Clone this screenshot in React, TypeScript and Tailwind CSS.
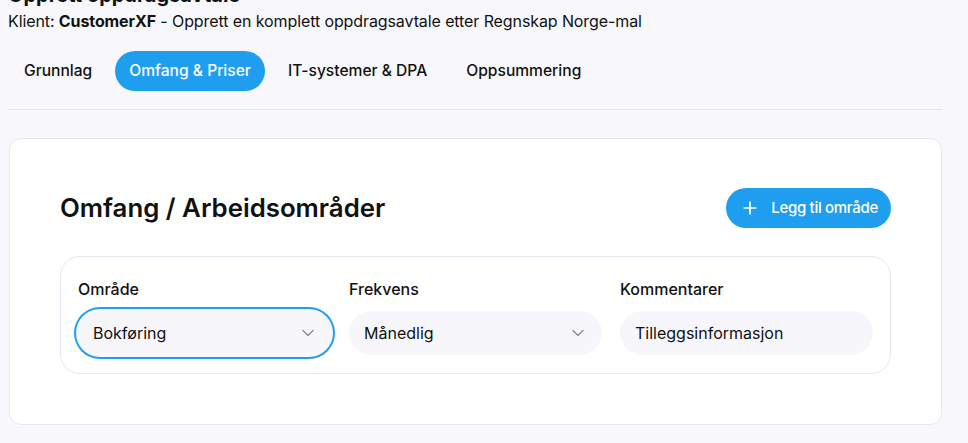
import React, { useState } from "react";
import { ChevronDown, Plus } from "lucide-react";

const tabs = ["Grunnlag", "Omfang & Priser", "IT-systemer & DPA", "Oppsummering"];

const App: React.FC = () => {
  const [activeTab, setActiveTab] = useState("Omfang & Priser");

  return (
    <div
      className="min-h-[443px] bg-[#f8f8fc] px-2 text-[#111] overflow-hidden"
      style={{ fontFamily: "Inter, 'Noto Sans', sans-serif" }}
    >
      <div className="w-[934px] -mt-[19px]">
        <h1 className="text-xl font-bold leading-[28px]">Opprett oppdragsavtale</h1>
        <p className="text-[16px] leading-6 tracking-[-0.1px]">
          Klient: <span className="font-bold">CustomerXF</span> - Opprett en komplett oppdragsavtale
          etter Regnskap Norge-mal
        </p>

        {/* Tabs */}
        <div className="flex items-center gap-[7px] mt-[18px] pb-[18px] border-b border-[#e3e6ee]">
          {tabs.map((tab) => (
            <button
              key={tab}
              onClick={() => setActiveTab(tab)}
              className={
                activeTab === tab
                  ? "h-10 px-[14px] rounded-full bg-[#1f9ef0] text-white text-[15.6px] font-medium"
                  : "h-10 px-4 rounded-full text-[#111] text-[15.6px] font-medium"
              }
            >
              {tab}
            </button>
          ))}
        </div>

        {/* Card */}
        <div className="mt-7 ml-px bg-white border border-[#e6e7ee] rounded-xl h-[287px] px-[50px] pt-[49px]">
          <div className="flex items-center justify-between">
            <h2 className="text-[25.8px] font-semibold leading-8">Omfang / Arbeidsområder</h2>
            <button className="h-10 pl-[14px] pr-[13px] rounded-full bg-[#1f9ef0] text-white flex items-center gap-[11px] text-[15px] font-medium tracking-[-0.3px]">
              <Plus size={20} strokeWidth={2} />
              Legg til område
            </button>
          </div>

          {/* Inner row */}
          <div className="mt-7 border border-[#e3e8f0] rounded-[20px] px-[17px] pt-[22px] pb-[18px] grid grid-cols-3 gap-[18px]">
            <div>
              <label className="block text-[16px] font-medium leading-5 mb-[12px]">Område</label>
              <div className="h-11 rounded-full bg-[#f7f7fb] shadow-[0_0_0_2px_#f7f7fb,0_0_0_4px_#1f9ef0] flex items-center justify-between pl-[15px] pr-[13px] text-[16px]">
                <span>Bokføring</span>
                <ChevronDown size={20} strokeWidth={1.6} className="text-[#8a8a8a]" />
              </div>
            </div>
            <div>
              <label className="block text-[16px] font-medium leading-5 mb-[12px]">Frekvens</label>
              <div className="h-11 rounded-full bg-[#f7f7fb] flex items-center justify-between pl-[15px] pr-[14px] text-[16px]">
                <span>Månedlig</span>
                <ChevronDown size={20} strokeWidth={1.6} className="text-[#8a8a8a]" />
              </div>
            </div>
            <div>
              <label className="block text-[16px] font-medium leading-5 mb-[12px]">Kommentarer</label>
              <input
                type="text"
                defaultValue="Tilleggsinformasjon"
                className="h-11 w-full rounded-full bg-[#f7f7fb] px-[15px] text-[16px] text-[#111] outline-none"
              />
            </div>
          </div>
        </div>
      </div>
    </div>
  );
};

export default App;
